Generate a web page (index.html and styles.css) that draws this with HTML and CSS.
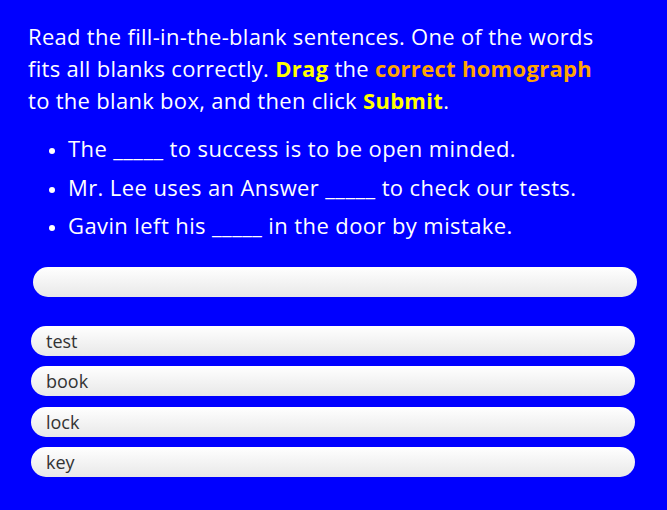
FILE: index.html
```html
<!DOCTYPE html>
<html>
<head>
<meta charset="utf-8">
<link rel="stylesheet" href="styles.css">
</head>
<body>
<div class="page">
  <p class="intro">Read the fill-in-the-blank sentences. One of the words fits all blanks correctly. <b class="yellow">Drag</b> the <b class="orange">correct homograph</b> to the blank box, and then click <b class="yellow">Submit</b>.</p>
  <ul class="sentences">
    <li>The _____ to success is to be open minded.</li>
    <li>Mr. Lee uses an Answer _____ to check our tests.</li>
    <li>Gavin left his _____ in the door by mistake.</li>
  </ul>
  <div class="drop"></div>
  <div class="options">
    <div class="opt">test</div>
    <div class="opt">book</div>
    <div class="opt">lock</div>
    <div class="opt">key</div>
  </div>
</div>
</body>
</html>
```
FILE: styles.css
```css
html, body {
  margin: 0;
  padding: 0;
  background: #0000ff;
}
.page {
  width: 667px;
  height: 510px;
  box-sizing: border-box;
  padding: 20px 30px 0 31px;
  font-family: "Open Sans", "Noto Sans", sans-serif;
  color: #ffffff;
}
.intro {
  margin: 0 0 0 -3px;
  width: 590px;
  font-size: 22px;
  line-height: 32px;
  letter-spacing: 0.3px;
}
.yellow { color: #ffff00; }
.orange { color: #ffa500; }
.sentences {
  margin: 13px 0 0 0;
  padding-left: 37px;
  font-size: 22px;
  line-height: 38.5px;
  letter-spacing: 0.4px;
}
.sentences li::marker {
  font-size: 17px;
}
.drop {
  margin: 22px 0 0 2px;
  height: 30px;
  border-radius: 15px;
  background: linear-gradient(#ffffff, #e8e8e8);
}
.options {
  margin-top: 29px;
  display: flex;
  flex-direction: column;
  gap: 10.5px;
}
.opt {
  height: 30px;
  border-radius: 15px;
  margin-right: 2px;
  background: linear-gradient(#ffffff, #e8e8e8);
  color: #333333;
  font-size: 18px;
  line-height: 30px;
  padding-left: 15px;
}
```
